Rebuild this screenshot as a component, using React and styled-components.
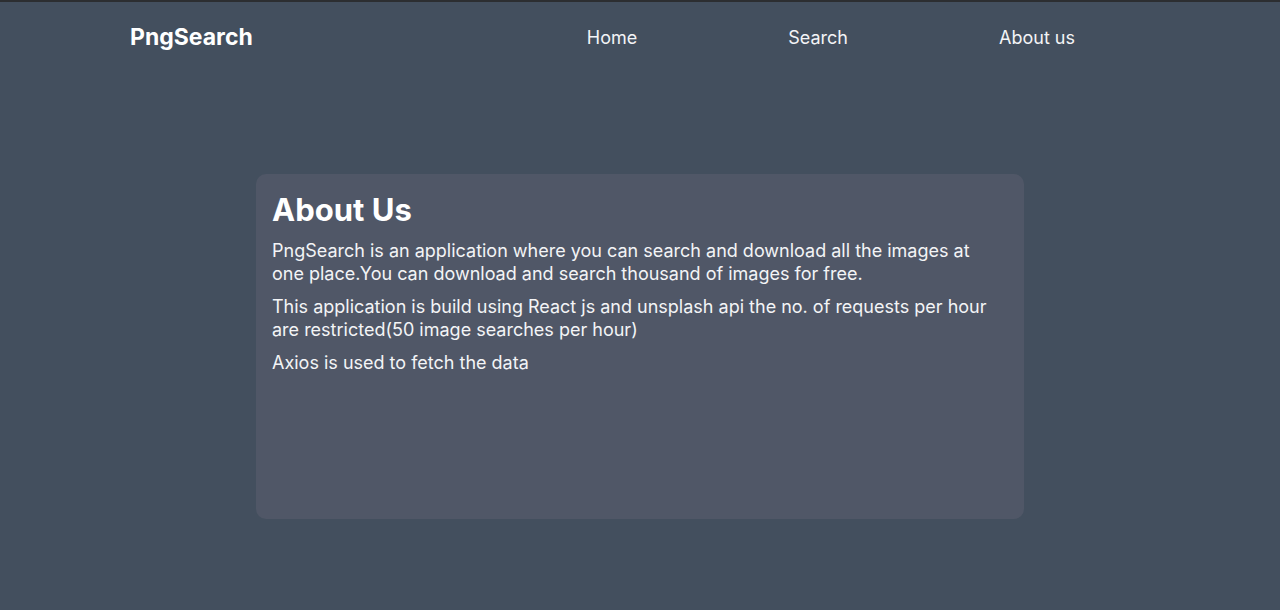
import styled, { createGlobalStyle } from "styled-components"

const GlobalStyle = createGlobalStyle`
  * {
    box-sizing: border-box;
  }
  body {
    margin: 0;
    background: #434f5e;
    font-family: Inter, "Noto Sans", sans-serif;
    color: #f3f4f6;
  }
`

export default function App() {
  return (
    <Page>
      <GlobalStyle />
      <Nav>
        <Brand>PngSearch</Brand>
        <Links>
          <NavLink href="#">Home</NavLink>
          <NavLink href="#">Search</NavLink>
          <NavLink href="#">About us</NavLink>
        </Links>
      </Nav>
      <Main>
        <Card>
          <Title>About Us</Title>
          <Text>
            PngSearch is an application where you can search and download all the images at
            one place.You can download and search thousand of images for free.
          </Text>
          <Text>
            This application is build using React js and unsplash api the no. of requests per hour
            are restricted(50 image searches per hour)
          </Text>
          <Text>Axios is used to fetch the data</Text>
        </Card>
      </Main>
    </Page>
  )
}

const Page = styled.div`
  min-height: 610px;
  border-top: 2px solid #2c2e31;
  background: #434f5e;
`
const Nav = styled.nav`
  height: 70px;
  display: flex;
  align-items: center;
  justify-content: space-between;
  padding: 0 205px 0 130px;
`
const Brand = styled.div`
  font-size: 23px;
  font-weight: 700;
  color: #ffffff;
`
const Links = styled.div`
  display: flex;
  gap: 151px;
`
const NavLink = styled.a`
  font-size: 18px;
  color: #f3f4f6;
  text-decoration: none;
`
const Main = styled.main`
  display: flex;
  justify-content: center;
  padding-top: 102px;
`
const Card = styled.section`
  width: 768px;
  height: 345px;
  background: #505767;
  border-radius: 10px;
  padding: 16px 28px 16px 16px;
`
const Title = styled.h1`
  margin: 0 0 9px;
  font-size: 31px;
  font-weight: 700;
  color: #ffffff;
  line-height: 40px;
`
const Text = styled.p`
  margin: 0 0 10px;
  font-size: 18px;
  line-height: 23px;
  color: #f3f4f6;
`
